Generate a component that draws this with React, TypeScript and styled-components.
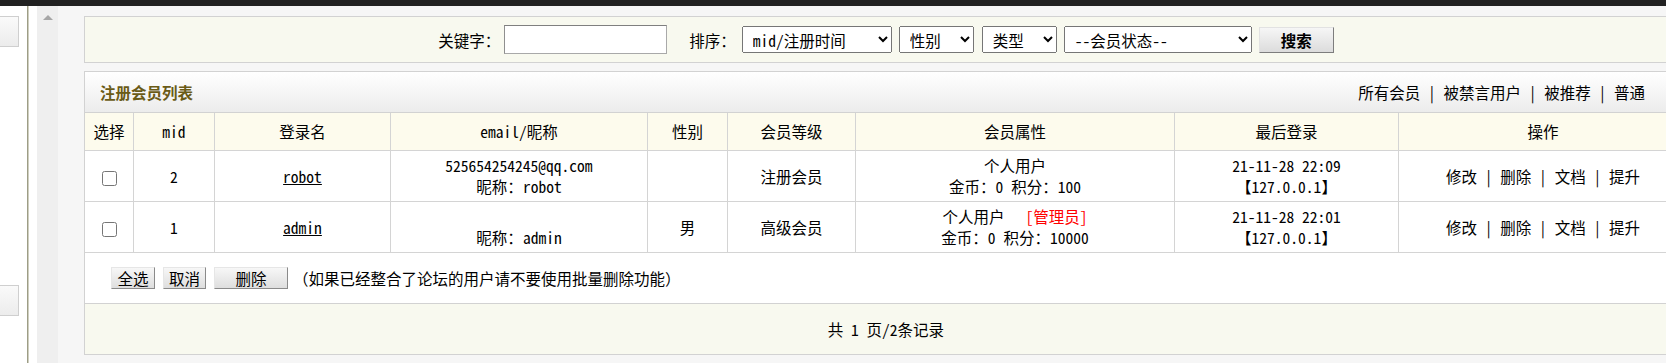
import React from "react";
import styled, { createGlobalStyle } from "styled-components";

const FONT = `"Noto Sans Mono CJK SC", "Noto Sans CJK SC", "Liberation Mono", monospace`;

const GlobalStyle = createGlobalStyle`
  html, body {
    margin: 0;
    padding: 0;
    overflow: hidden;
  }
  body {
    background: #f6f6f6;
    font-family: ${FONT};
    font-size: 15.5px;
    color: #000;
  }
  * {
    box-sizing: border-box;
  }
`;

interface Member {
  id: number;
  name: string;
  email: string;
  nick: string;
  sex: string;
  rank: string;
  admin: boolean;
  coins: number;
  scores: number;
  lastTime: string;
  ip: string;
}

const members: Member[] = [
  {
    id: 2,
    name: "robot",
    email: "525654254245@qq.com",
    nick: "robot",
    sex: "",
    rank: "注册会员",
    admin: false,
    coins: 0,
    scores: 100,
    lastTime: "21-11-28 22:09",
    ip: "127.0.0.1",
  },
  {
    id: 1,
    name: "admin",
    email: "",
    nick: "admin",
    sex: "男",
    rank: "高级会员",
    admin: true,
    coins: 0,
    scores: 10000,
    lastTime: "21-11-28 22:01",
    ip: "127.0.0.1",
  },
];

const columns = [
  { title: "选择", width: 49 },
  { title: "mid", width: 81 },
  { title: "登录名", width: 176 },
  { title: "email/昵称", width: 257 },
  { title: "性别", width: 80 },
  { title: "会员等级", width: 128 },
  { title: "会员属性", width: 319 },
  { title: "最后登录", width: 224 },
  { title: "操作", width: 288 },
];

const filterLinks = ["所有会员", "被禁言用户", "被推荐", "普通"];
const ops = ["修改", "删除", "文档", "提升"];

const App = () => {
  return (
    <Frame>
      <GlobalStyle />
      <TopBar />
      <Body>
        <SideMenu>
          <MenuStub />
          <MenuStub $gap={238} />
        </SideMenu>
        <Divider />
        <Spacer />
        <ScrollTrack>
          <ArrowUp />
        </ScrollTrack>
        <Main>
          <SearchPanel>
            <Label>关键字：</Label>
            <KeywordInput type="text" $gap={4} />
            <Label $gap={22}>排序：</Label>
            <Select $w={150} $gap={6}>
              <option>mid/注册时间</option>
            </Select>
            <Select $w={75} $gap={7}>
              <option>性别</option>
            </Select>
            <Select $w={75} $gap={8}>
              <option>类型</option>
            </Select>
            <Select $w={188} $gap={7}>
              <option>--会员状态--</option>
            </Select>
            <SearchButton type="button">搜索</SearchButton>
          </SearchPanel>

          <ListPanel>
            <ListHead>
              <ListTitle>注册会员列表</ListTitle>
              <FilterLinks>
                {filterLinks.map((f, i) => (
                  <React.Fragment key={f}>
                    {i > 0 && <Sep>|</Sep>}
                    <PlainLink>{f}</PlainLink>
                  </React.Fragment>
                ))}
              </FilterLinks>
            </ListHead>

            <MemberTable>
              <colgroup>
                {columns.map((c) => (
                  <col key={c.title} style={{ width: c.width }} />
                ))}
              </colgroup>
              <thead>
                <HeadRow>
                  {columns.map((c) => (
                    <HeadCell key={c.title}>{c.title}</HeadCell>
                  ))}
                </HeadRow>
              </thead>
              <tbody>
                {members.map((m) => (
                  <BodyRow key={m.id}>
                    <Cell>
                      <Check type="checkbox" />
                    </Cell>
                    <Cell>{m.id}</Cell>
                    <Cell>
                      <NameLink>{m.name}</NameLink>
                    </Cell>
                    <Cell>
                      {m.email}
                      <br />
                      昵称：{m.nick}
                    </Cell>
                    <Cell>{m.sex}</Cell>
                    <Cell>{m.rank}</Cell>
                    <Cell>
                      个人用户
                      {m.admin && <AdminTag>[管理员]</AdminTag>}
                      <br />
                      金币：{m.coins} 积分：{m.scores}
                    </Cell>
                    <Cell>
                      {m.lastTime}
                      <br />【{m.ip}】
                    </Cell>
                    <Cell>
                      {ops.map((o, i) => (
                        <React.Fragment key={o}>
                          {i > 0 && <Sep>|</Sep>}
                          <PlainLink>{o}</PlainLink>
                        </React.Fragment>
                      ))}
                    </Cell>
                  </BodyRow>
                ))}
              </tbody>
            </MemberTable>

            <ActionBar>
              <SmallButton type="button" $w={44}>
                全选
              </SmallButton>
              <SmallButton type="button" $w={43}>
                取消
              </SmallButton>
              <SmallButton type="button" $w={74}>
                删除
              </SmallButton>
              <Note>（如果已经整合了论坛的用户请不要使用批量删除功能）</Note>
            </ActionBar>

            <Pager>共 1 页/2条记录</Pager>
          </ListPanel>
        </Main>
      </Body>
    </Frame>
  );
};

export default App;

const Frame = styled.div`
  width: 1666px;
  height: 363px;
  display: flex;
  flex-direction: column;
  overflow: hidden;
`;

const TopBar = styled.div`
  flex: none;
  height: 6px;
  background: #212121;
`;

const Body = styled.div`
  flex: 1;
  min-height: 0;
  display: grid;
  grid-template-columns: 27px 2px 8px 21px minmax(0, 1fr);
`;

const SideMenu = styled.div`
  background: #fff;
  padding-top: 10px;
  display: flex;
  flex-direction: column;
`;

const MenuStub = styled.div<{ $gap?: number }>`
  width: 19px;
  height: 31px;
  margin-top: ${(p) => p.$gap || 0}px;
  border: 1px solid #cfcfcf;
  border-left: none;
  background: linear-gradient(#fafafa, #ececec);
`;

const Divider = styled.div`
  border-left: 1px solid #9d9d86;
  background: #cfcfc0;
`;

const Spacer = styled.div`
  background: #fff;
`;

const ScrollTrack = styled.div`
  background: #efefef;
  padding-top: 9px;
`;

const ArrowUp = styled.div`
  width: 0;
  height: 0;
  margin: 0 auto;
  border-left: 5px solid transparent;
  border-right: 5px solid transparent;
  border-bottom: 5px solid #a6a6a6;
`;

const Main = styled.div`
  background: #f6f6f6;
  padding: 10px 0 0 26px;
  overflow: hidden;
`;

const SearchPanel = styled.div`
  width: 1604px;
  height: 47px;
  border: 1px solid #d2d2d2;
  background: #f8f9ef;
  display: flex;
  align-items: center;
  justify-content: center;
`;

const Label = styled.span<{ $gap?: number }>`
  margin-left: ${(p) => p.$gap || 0}px;
  line-height: 20px;
  white-space: nowrap;
`;

const KeywordInput = styled.input<{ $gap?: number }>`
  margin: 0 0 0 ${(p) => p.$gap || 0}px;
  width: 163px;
  height: 29px;
  padding: 0 4px;
  border: 1px solid #a9a9a9;
  border-top-color: #7f7f7f;
  border-left-color: #8f8f8f;
  background: #fff;
  font-family: inherit;
  font-size: 15.5px;
`;

const Select = styled.select<{ $w: number; $gap?: number }>`
  margin: 0 0 0 ${(p) => p.$gap || 0}px;
  width: ${(p) => p.$w}px;
  height: 27px;
  padding: 0 2px 0 6px;
  font-family: inherit;
  font-size: 15.5px;
  color: #000;
`;

const SearchButton = styled.button`
  margin: 0 0 0 7px;
  width: 75px;
  height: 26px;
  padding: 0;
  border: 1px solid;
  border-color: #e2e2e2 #7d7d7d #7d7d7d #e2e2e2;
  background: linear-gradient(#f6f6f6, #dcdcdc);
  font-family: inherit;
  font-size: 15.5px;
  font-weight: bold;
  color: #000;
`;

const ListPanel = styled.div`
  width: 1604px;
  margin-top: 8px;
  border: 1px solid #d2d2d2;
  background: #fff;
`;

const ListHead = styled.div`
  height: 41px;
  border-bottom: 1px solid #d2d2d2;
  background: linear-gradient(#ffffff, #ececec);
  display: flex;
  align-items: center;
  justify-content: space-between;
  padding: 0 42px 0 15px;
`;

const ListTitle = styled.h3`
  margin: 0;
  font-size: 15.5px;
  font-weight: bold;
  color: #6a5b17;
  line-height: 20px;
`;

const FilterLinks = styled.div`
  line-height: 20px;
  white-space: nowrap;
`;

const PlainLink = styled.a`
  color: #000;
  text-decoration: none;
  cursor: pointer;
`;

const Sep = styled.span`
  padding: 0 0.5em;
`;

const MemberTable = styled.table`
  width: 1602px;
  table-layout: fixed;
  border-collapse: separate;
  border-spacing: 0;
`;

const HeadRow = styled.tr`
  height: 38px;
`;

const BodyRow = styled.tr`
  height: 51px;
`;

const HeadCell = styled.th`
  padding: 0;
  border-right: 1px solid #d4d4d4;
  border-bottom: 1px solid #d4d4d4;
  background: #fdfbed;
  font-weight: normal;
  text-align: center;
  line-height: 21px;

  &:last-child {
    border-right: none;
  }
`;

const Cell = styled.td`
  padding: 0;
  border-right: 1px solid #d4d4d4;
  border-bottom: 1px solid #d4d4d4;
  text-align: center;
  vertical-align: middle;
  line-height: 21px;
  white-space: nowrap;

  &:last-child {
    border-right: none;
  }
`;

const Check = styled.input`
  width: 15px;
  height: 15px;
  margin: 0;
  vertical-align: middle;
`;

const NameLink = styled.a`
  color: #000;
  text-decoration: underline;
  cursor: pointer;
`;

const AdminTag = styled.span`
  margin-left: 21px;
  color: #ff0000;
`;

const ActionBar = styled.div`
  height: 51px;
  border-bottom: 1px solid #d2d2d2;
  display: flex;
  align-items: center;
  gap: 8px;
  padding-left: 26px;
`;

const SmallButton = styled.button<{ $w: number }>`
  width: ${(p) => p.$w}px;
  height: 22px;
  padding: 0;
  border: 1px solid;
  border-color: #e6e6e6 #8a8a8a #8a8a8a #e6e6e6;
  background: linear-gradient(#f7f7f7, #dedede);
  font-family: inherit;
  font-size: 15.5px;
  line-height: 20px;
  color: #000;
`;

const Note = styled.span`
  margin-left: -3px;
  line-height: 20px;
  white-space: nowrap;
`;

const Pager = styled.div`
  height: 50px;
  background: #f8f9ef;
  display: flex;
  align-items: center;
  justify-content: center;
`;
